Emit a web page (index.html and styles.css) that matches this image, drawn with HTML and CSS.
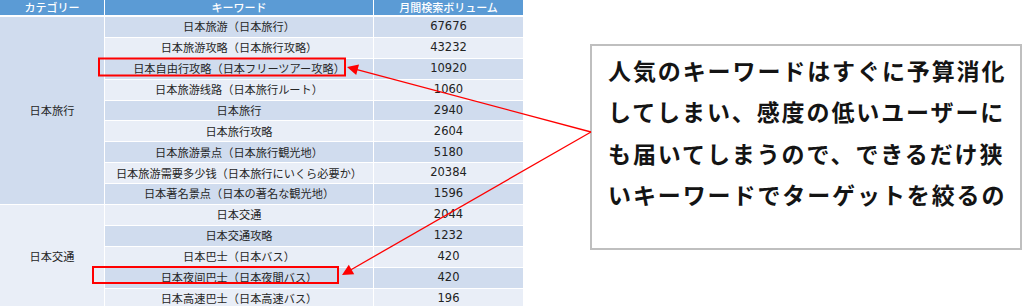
FILE: index.html
```html
<!DOCTYPE html>
<html lang="ja">
<head>
<meta charset="utf-8">
<title>キーワード</title>
<link rel="stylesheet" href="styles.css">
</head>
<body>
<div class="page">
  <div class="kw-table">
    <div class="hd">カテゴリー</div>
    <div class="hd">キーワード</div>
    <div class="hd">月間検索ボリューム</div>

    <div class="cat dark span9">日本旅行</div>
    <div class="kw dark">日本旅游（日本旅行）</div><div class="num dark">67676</div>
    <div class="kw light">日本旅游攻略（日本旅行攻略）</div><div class="num light">43232</div>
    <div class="kw dark">日本自由行攻略（日本フリーツアー攻略）</div><div class="num dark">10920</div>
    <div class="kw light">日本旅游线路（日本旅行ルート）</div><div class="num light">1060</div>
    <div class="kw dark">日本旅行</div><div class="num dark">2940</div>
    <div class="kw light">日本旅行攻略</div><div class="num light">2604</div>
    <div class="kw dark">日本旅游景点（日本旅行観光地）</div><div class="num dark">5180</div>
    <div class="kw light">日本旅游需要多少钱（日本旅行にいくら必要か）</div><div class="num light">20384</div>
    <div class="kw dark">日本著名景点（日本の著名な観光地）</div><div class="num dark">1596</div>

    <div class="cat light span5">日本交通</div>
    <div class="kw light">日本交通</div><div class="num light">2044</div>
    <div class="kw dark">日本交通攻略</div><div class="num dark">1232</div>
    <div class="kw light">日本巴士（日本バス）</div><div class="num light">420</div>
    <div class="kw dark">日本夜间巴士（日本夜間バス）</div><div class="num dark">420</div>
    <div class="kw light">日本高速巴士（日本高速バス）</div><div class="num light">196</div>
  </div>

  <div class="callout">
    <p class="callout-text">人気のキーワードはすぐに予算消化<br>してしまい、感度の低いユーザーに<br>も届いてしまうので、できるだけ狭<br>いキーワードでターゲットを絞るの</p>
  </div>
</div>

<svg class="overlay" width="1022" height="306" viewBox="0 0 1022 306" xmlns="http://www.w3.org/2000/svg">
  <rect x="99" y="58.5" width="246" height="17" fill="none" stroke="#ff0000" stroke-width="2"/>
  <rect x="93" y="267" width="245" height="16" fill="none" stroke="#ff0000" stroke-width="2"/>
  <line x1="591" y1="132" x2="357" y2="69.6" stroke="#ff0000" stroke-width="1.3"/>
  <polygon points="347,67 356.2,75.1 359,64.5" fill="#ff0000"/>
  <line x1="591" y1="132" x2="351" y2="269.7" stroke="#ff0000" stroke-width="1.3"/>
  <polygon points="342,275 354.2,274.3 348.8,264.7" fill="#ff0000"/>
</svg>
</body>
</html>
```

FILE: styles.css
```css
html, body {
  margin: 0;
  padding: 0;
  background: #ffffff;
  overflow: hidden;
  height: 306px;
}

body {
  position: relative;
  font-family: "Noto Sans CJK JP", "Noto Sans", sans-serif;
}

.page {
  display: flex;
  align-items: flex-start;
}

.kw-table {
  display: grid;
  grid-template-columns: 104px 268px 149px;
  grid-template-rows: 16px;
  grid-auto-rows: 19.9px;
  column-gap: 1px;
  row-gap: 1px;
  width: 523px;
  flex: none;
  font-size: 11.2px;
  color: #262626;
}

.hd {
  background: #5b9bd5;
  color: #ffffff;
  height: 15px;
  line-height: 15px;
  text-align: center;
  margin-bottom: 1px;
  font-size: 11px;
  font-weight: 500;
}

.kw, .num, .cat {
  display: flex;
  align-items: center;
  justify-content: center;
  white-space: nowrap;
  line-height: 1;
}

.num {
  font-family: "DejaVu Sans", sans-serif;
  font-size: 11.5px;
  color: #222222;
}

.dark { background: #d0dcee; }
.light { background: #e9eef7; }

.span9 { grid-row: span 9; }
.span5 { grid-row: span 5; }

.callout {
  flex: none;
  box-sizing: border-box;
  width: 432px;
  height: 206px;
  margin-left: 67px;
  margin-top: 44px;
  border: 2px solid #bfbfbf;
  background: #ffffff;
}

.callout-text {
  margin: 0;
  padding: 4px 0 0 16px;
  font-size: 23px;
  font-weight: 700;
  letter-spacing: 1.9px;
  line-height: 41.3px;
  color: #141414;
  white-space: nowrap;
}

.overlay {
  position: absolute;
  left: 0;
  top: 0;
  pointer-events: none;
}
```
